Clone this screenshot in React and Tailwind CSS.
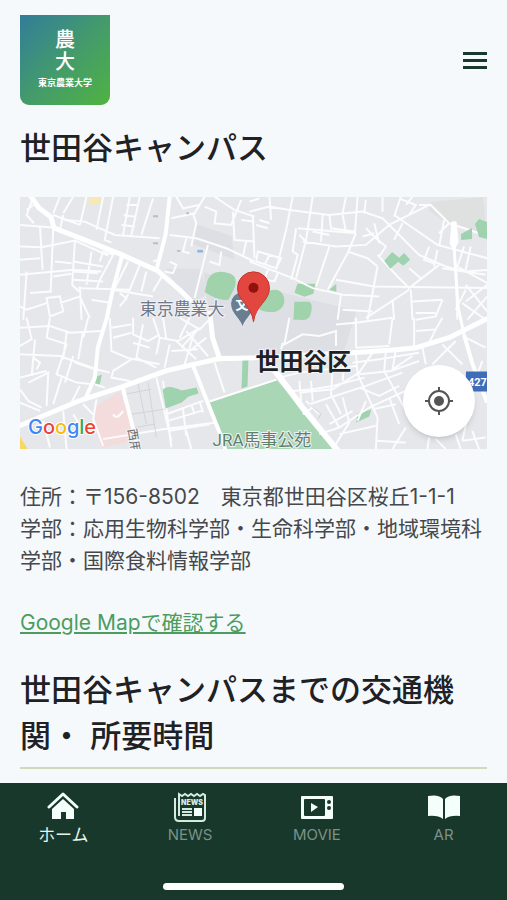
import React from "react";

const MapDrawing = () => {
  return (
    <svg
      viewBox="0 0 468 253"
      preserveAspectRatio="xMidYMid slice"
      className="block w-full font-['Roboto','Noto_Sans_CJK_JP',sans-serif]"
      role="img"
      aria-label="世田谷区の地図"
    >
      <rect width="468" height="253" fill="#e6e7eb" />

      {/* Blocks and parks */}
      <path d="M176 27l36 12 3 24-42-16z" fill="#dddfe4" />
      <path d="M145 72l35 0 8 24-15 12z" fill="#dfe0e5" />
      <path d="M184 76l55 14 98 24-12 40-90 6-38-2-7-30z" fill="#dedfe4" />
      <path d="M412 5l52-5 4 40-40-14-18-12z" fill="#dfe1e1" />
      <path d="M68 0h13v6l-10 2z" fill="#f7e9b4" />
      <path d="M0 240l8 13H0z" fill="#f7d867" />
      <path d="M74 211l26-16 12 32-3 19-28 5-6-25z" fill="#f5dcdc" />
      <path d="M190 205l45-15 22-7 60 70H203z" fill="#a9d7b5" />
      <path
        d="M187 88c1-12 12-16 24-11 6 3 6 7 4 14l-6 12c-8 1-17-3-24-8zM243 99c8-8 18-8 21 0 3 8-2 14-8 16-8 1-14 0-18-4zM278 87h18l-2 10-9 3-10-4zM275 105h13c4 0 5 3 4 9-1 8-5 10-11 9h-7zM310 93l7-6v8z"
        fill="#a0d2ac"
      />
      <path
        d="M223 163l6-2-1 29-6 2zM77 180l5-2-2 10h-5zM338 217l14-4-2 7-13 6z"
        fill="#9fd2ae"
      />

      {/* Side streets, north west */}
      <g
        transform="translate(0 -7) scale(.3333)"
        fill="none"
        stroke="#fcfcfd"
        strokeWidth="6"
      >
        <path d="M0 105l100 8M0 170l65 2 100-20 100 45M42 100L20 75 40 20M60 110l8 130M100 115l-8 190M0 255l160-15 85 5M20 245L10 390M165 155l-8 130 20 20M40 45L20 60M100 75l80 30M120 20l-20 50M130 75l-10 45M160 20l-30 50M200 20l-20 85M250 20l-20 100" />
        <path d="M160 215l90 15M160 245l75 5M160 270l90 5M175 295l155 5M215 185l-15 100M240 215l10-30 30 10-40 75-10 30M135 90l60 5 90 40 135 10M280 20l-25 130 20 8M330 20l-20 115M360 20l-25 115M320 45h38M312 75l32 5M305 105l40 5M400 25l-35 110M450 135l80 10 90 30 85 40M455 85l70-15 30-50M520 70l10 30-15 70M555 50l35 15-5 35 50 5 30-75M585 20l60 40 60 20M640 65l5 85 60 5M665 90l40 5" />
        <path d="M565 165l-40 160M605 185l-5 40-30-10M450 215l20 10-10 25-25-5M400 215l15-5M500 145l-10 40 20 5M360 225l-40 100M325 215l-45 90M280 300l120 20M80 325l40-5 10 45-40 15zM120 340l60-20 30 65M0 350l20 10 60-20M180 290l5 100M215 330l60 10M300 310l20 15-20 25M95 305l-65 5M380 245l-15 60M430 255l-30 50M0 210l60-5M105 215l50 5M100 260l55-8M470 20l20 35 50-10M680 155l-10 45" />
        <path d="M400 79h15M400 160h15M472 183h10M500 70h8" stroke="#b9bdc4" />
        <path d="M533 184h17" stroke="#8db5df" strokeWidth="8" />
      </g>

      {/* Side streets, north east */}
      <g
        transform="translate(230 -7) scale(.3333)"
        fill="none"
        stroke="#fcfcfd"
        strokeWidth="6"
      >
        <path d="M0 65l60-15 60 10 120 15 100-10 60 20 60 60 50 50 80 35 60 15 70-5 60-30M10 75l5 130M0 215l130 50 60 30 90 20 110 5M60 20l5 70M0 35l30-10M130 20l-20 100-30 120M190 20l-20 130-30 115M290 20l-10 50M325 20l-8 110M350 30l-5 40M240 75l5 40 70 10M280 75l10 50M145 115l175 15M160 155l100 15 90-5 70-60 120-60" />
        <path d="M140 115l-10 70 15 10-20 75M150 135l25 25M30 90l30 10M20 105l35 10M25 185l70 20-15 30-60-20zM60 195l-15 30M240 170l-40 120M320 130l-25 60-60 110M295 185l60 20 30 25M350 115l30 30 30 25-20 30M340 140l35-10M375 100l15 60M385 195l60 65 35 35 90-70M385 230l-30 160M435 75l130 90 150 40M510 45l35 0 55 55 120 40M585 90l-15 80M600 100l-30 30M460 100l-25 50" />
        <path d="M400 20v45M455 20l-20 60M450 25l50 20-20 30M490 20l-20 25M540 170l-15 40 30 10M565 180l-10 50M620 240l5 150M645 170l-20 60 90 50M580 235l130 20M665 170l-15 70M480 235l35 30M260 270l115 20 340 5M275 315l-10 75M480 300l-130 85M485 300l5 90M490 335l90-5M430 330l5 60M580 330l-20 50-60 10" />
        <path d="M650 285l65 80M715 285l-65 50M650 300l-30 60M715 320l-60 70M500 370h60M640 340l70 50M280 360l90 5M55 240l-10 30 30 5 10-25M220 75l-5 80M190 125l50 10" />
      </g>

      {/* Side streets, south west */}
      <g
        transform="translate(0 121) scale(.3333)"
        fill="none"
        stroke="#fcfcfd"
        strokeWidth="6"
      >
        <path d="M0 30l90-5 60 20 95-5M20 0l15 65-35 20M0 110l120 5 110 40M90 0l-10 60 60 20-30 90 60 25 50 5M45 65l-10 110M0 180l80-20M0 215l25 35 40 20M25 195l60-30-5 100M140 45l-10 80M40 120l20 15-10 20M160 115l-25 80M165 135l60 20M190 40l-15 85M0 255l60 25M125 180l-25 80M180 205l-25 50M205 0l-15 60" />
        <path d="M270 0l5 100 60 25-55 35-5 20 55 10M275 30l60-10M280 60l55-15M340 0v50l45 20 35-20M370 20l-20 100 60 30M400 0l20 60-10 50M340 75l50 15M320 120l100 20M420 60l55 10 50-30-30 100M430 0l10 65M450 80l-15 70M480 60l30-60M470 70l60 55M500 40l65 75M540 30l-55 60M560 60l-50 40M455 100l80-5M480 0l60 35 30-30M230 155l40 10M225 200l30 10" />
        <path d="M430 190l25 200M410 180l45 190M250 365l180-30 160-20M440 290l110-40M445 310l100-30M450 340l120-20M490 275l10 80M515 260l10 30M540 250l10 35M280 290q10 20 30-10M500 340l15 55M585 135l30 90M160 290l30 50M190 260l30 30M70 310l20 80M130 280l10 115M230 245l-10 60 30 80" />
        <path
          d="M355 200l25 120M315 230l80-15M335 290l100-15M345 330l60-10M385 195l25 165"
          stroke="#c6cbcd"
          strokeWidth="2"
        />
      </g>

      {/* Side streets, south east */}
      <g
        transform="translate(230 121) scale(.3333)"
        fill="none"
        stroke="#fcfcfd"
        strokeWidth="6"
      >
        <path d="M120 0l-15 80 55-30 50 5 50-15 0 45M320 0v90M430 0l-10 80M260 20l60-5 110-15M495 0v85M500 40l60-5 20-35M560 35l-20 40M320 90l100-5M100 75l-5 20" />
        <path d="M310 135l80-10 120-20M320 110l5 60 60 130-5 95M370 105l-40 60-80 50-95 10M410 100l-5 60 60 110M440 95l-10 60 60-40M330 170l95-10 85-30M90 180l60-15 170-20M130 220l60-5 60-10 95-25M180 260l170-55 110-40M210 290l-40-40M230 260l40 70 90-60 130-60M270 330l-60 20M240 320l70-40M330 210l60 25 60-30M185 190l5 60M250 150l-5 80 30 60M285 130l-5 60" />
        <path d="M270 350l110-25M280 240l20 75-50 80M350 250l-25 60M370 275l70-15M620 70l-70 70M580 80l60 60M650 60l60 30M700 130l-15 40M670 230l-30 140M640 370l70-10M620 350l15 45M540 360l-5 35M470 330l-40 65M420 240l30 80M670 340l20 55M560 365l30 30M380 370l90 5M520 90l10 50M190 270l-30 20M150 190l5 60" />
        <path d="M180 260l35 30-10 15M165 265l20 40" stroke="#cfd3d4" strokeWidth="3" />
      </g>

      {/* Small parks */}
      <path
        d="M365 64l8-9 7 6 5-5 6 7-7 6-5-4-8 7zM456 27l4-5 8 3v17l-8-2zM442 37l11-6v11l-11 1z"
        fill="#9fd2ae"
      />
      <path
        d="M143 193c5-5 13-2 19 1l5-1 10-2 2 6-10 3-7 6-16 6z"
        fill="#9fd2ae"
      />

      {/* Main roads */}
      <g fill="none" stroke="#ffffff" strokeLinejoin="round">
        <path d="M10 -2l9 13 12 9 3 11 23 9 43 17 38 17 22 19 12 12" strokeWidth="5" />
        <path d="M190 114l3 27 7 21" strokeWidth="5" />
        <path d="M150 0l-4 37-9 35M102 60l-9 33-6 28-9 30-3 30-10 22" strokeWidth="4" />
        <path d="M-2 230l62-26 40-13 47-17 26-6 27-6 35-1 98-5 44-3 20-2 33-10 40-20" strokeWidth="5" />
        <path d="M254 172l29 39 36 44" strokeWidth="6" />
        <path d="M173 168l15 38 12 30 6 18M103 191l10 40 6 23" strokeWidth="4" />
        <path d="M445 138l8 28 15 40" strokeWidth="4" />
        <path d="M190 205l67-22" strokeWidth="2" />
        <path d="M434 25l1 26M435 50l4 60 6 28" strokeWidth="3" />
        <path d="M433 25h4l2 20-4 8-4-6z" fill="#ffffff" />
      </g>

      {/* Place names */}
      <g fill="#70798a" stroke="#f1f2f4" strokeWidth="2" paintOrder="stroke">
        <text x="120" y="118" fontSize="17">
          東京農業大
        </text>
        <text x="193" y="250" fontSize="17" fill="#5f8069">
          JRA馬事公苑
        </text>
        <text
          transform="translate(108 233) rotate(80)"
          fontSize="12"
          fill="#666b70"
        >
          西用
        </text>
      </g>
      <text
        x="236"
        y="173"
        fontSize="24"
        fontWeight="700"
        fill="#202124"
        stroke="#f4f4f6"
        strokeWidth="2"
        paintOrder="stroke"
      >
        世田谷区
      </text>
      <path d="M447 175h21v20h-19q-3-9-2-20z" fill="#3f6db9" />
      <text x="449" y="189" fontSize="11" fontWeight="700" fill="#ffffff">
        427
      </text>

      {/* Google wordmark */}
      <text
        x="8"
        y="238"
        fontSize="20"
        fontWeight="500"
        stroke="#ffffff"
        strokeWidth="2"
        paintOrder="stroke"
        className="font-['Inter',sans-serif]"
      >
        <tspan fill="#4285f4">G</tspan>
        <tspan fill="#ea4335">o</tspan>
        <tspan fill="#fbbc05">o</tspan>
        <tspan fill="#4285f4">g</tspan>
        <tspan fill="#34a853">l</tspan>
        <tspan fill="#ea4335">e</tspan>
      </text>

      {/* School marker */}
      <path
        d="M223 131c-2-9-12-14-12-24a12 12 0 0 1 24 0c0 10-10 15-12 24z"
        fill="#6b7e91"
        stroke="#e8eaed"
      />
      <text x="216" y="112" fontSize="13" fontWeight="700" fill="#ffffff">
        文
      </text>

      {/* Pin */}
      <path
        d="M234 125c-2-17-16-20-16-34a16 16 0 0 1 32 0c0 14-14 17-16 34z"
        fill="#e2473f"
        stroke="#c5362f"
      />
      <circle cx="234" cy="91" r="5" fill="#8f120d" />
    </svg>
  );
};

const HomeIcon = () => (
  <svg viewBox="0 0 32 32" className="h-8 w-8" aria-hidden="true">
    <path
      d="M2 16L16 3l14 13"
      fill="none"
      stroke="#f4fffb"
      strokeWidth="3"
      strokeLinecap="round"
      strokeLinejoin="round"
    />
    <path d="M5 18L16 8l11 10v10h-8v-7h-5v7H5z" fill="#f4fffb" />
  </svg>
);

const NewsIcon = () => (
  <svg viewBox="0 0 32 32" className="h-8 w-8" aria-hidden="true">
    <g fill="none" stroke="#d5ebe2" strokeWidth="2">
      <path d="M5 25V3l3 2 3-2 3 2 3-2 3 2 3-2 3 2 3-2 2 1v23q0 3-3 3H5q-4 0-4-4V7" />
      <path d="M8 18h10M8 21h10M8 24h10" />
    </g>
    <rect x="20" y="17" width="8" height="8" fill="#f4fffb" />
    <text
      x="18"
      y="14"
      textAnchor="middle"
      fontSize="7"
      fontWeight="900"
      fill="#d5ebe2"
    >
      NEWS
    </text>
  </svg>
);

const MovieIcon = () => (
  <svg viewBox="0 0 32 32" className="h-8 w-8" aria-hidden="true">
    <rect y="5" width="32" height="23" rx="1" fill="#f4fffb" />
    <rect x="3" y="8" width="21" height="17" rx="1" fill="#17382b" />
    <path d="M10 12l7 4-7 5z" fill="#f4fffb" />
    <circle cx="28" cy="11" r="2" fill="#17382b" />
    <circle cx="28" cy="17" r="2" fill="#17382b" />
  </svg>
);

const BookIcon = () => (
  <svg viewBox="0 0 32 32" className="h-8 w-8" aria-hidden="true">
    <path
      d="M0 5q11-2 15 3v20q-5-4-15-3zM32 5q-11-2-15 3v20q5-4 15-3z"
      fill="#f4fffb"
    />
  </svg>
);

const tabs = [
  { label: "ホーム", icon: HomeIcon, active: true },
  { label: "NEWS", icon: NewsIcon },
  { label: "MOVIE", icon: MovieIcon },
  { label: "AR", icon: BookIcon },
];

const App = () => {
  return (
    <div
      lang="ja"
      className="flex min-h-screen flex-col bg-[#f5f9fc] font-['Inter','Noto_Sans_CJK_JP',sans-serif] text-[#202124]"
    >
      {/* Header */}
      <header className="flex items-center justify-between px-5 pt-[15px]">
        <a
          href="#home"
          className="flex h-[90px] w-[90px] flex-col items-center rounded-b-[9px] bg-linear-to-br from-[#337c98] via-[#449a6b] to-[#4fb33b] pt-[14px] text-white"
        >
          <span className="text-xl leading-[22px] font-medium">農</span>
          <span className="text-xl leading-[22px] font-medium">大</span>
          <span className="mt-1 text-[9px] leading-3 font-bold">
            東京農業大学
          </span>
        </a>
        <button type="button" aria-label="メニュー" className="flex w-6 flex-col gap-1">
          <span className="h-[3px] w-full bg-[#17382b]"></span>
          <span className="h-[3px] w-full bg-[#17382b]"></span>
          <span className="h-[3px] w-full bg-[#17382b]"></span>
        </button>
      </header>

      <main className="grow px-5">
        <h1 className="mt-5 text-[31px] leading-[46px] font-medium">
          世田谷キャンパス
        </h1>

        {/* Map */}
        <div className="relative mt-[26px]">
          <MapDrawing />
          <button
            type="button"
            aria-label="現在地"
            className="absolute right-3 bottom-3 flex h-[72px] w-[72px] items-center justify-center rounded-full bg-white shadow-md"
          >
            <svg viewBox="0 0 28 28" className="h-7 w-7" aria-hidden="true">
              <circle cx="14" cy="14" r="5" fill="#555555" />
              <circle
                cx="14"
                cy="14"
                r="10"
                fill="none"
                stroke="#555555"
                strokeWidth="2"
              />
              <path
                d="M14 0v4M14 24v4M0 14h4M24 14h4"
                stroke="#555555"
                strokeWidth="2"
              />
            </svg>
          </button>
        </div>

        {/* Address */}
        <div className="mt-8 text-[21px] leading-8 text-[#46484b]">
          <p>住所：〒156-8502　東京都世田谷区桜丘1-1-1</p>
          <p>学部：応用生物科学部・生命科学部・地域環境科学部・国際食料情報学部</p>
          <a
            href="#map"
            className="mt-[30px] inline-block text-[#4d9c5f] underline underline-offset-2"
          >
            Google Mapで確認する
          </a>
        </div>

        <h2 className="mt-7 border-b-2 border-[#d0dabb] pb-2 text-[31px] leading-[46px] font-medium">
          世田谷キャンパスまでの交通機関・ 所要時間
        </h2>
      </main>

      {/* Bottom tabs */}
      <nav className="bg-[#17382b] pt-2">
        <ul className="grid grid-cols-4">
          {tabs.map(({ label, icon: Icon, active }) => (
            <li key={label}>
              <a
                href={`#${label}`}
                className={`flex flex-col items-center leading-6 ${
                  active
                    ? "text-[17px] text-[#e6f5ef]"
                    : "text-[15px] text-[#7d9188]"
                }`}
              >
                <Icon />
                {label}
              </a>
            </li>
          ))}
        </ul>
        <div className="mx-auto mt-9 mb-[10px] h-[7px] w-[181px] rounded-full bg-white"></div>
      </nav>
    </div>
  );
};

export default App;
